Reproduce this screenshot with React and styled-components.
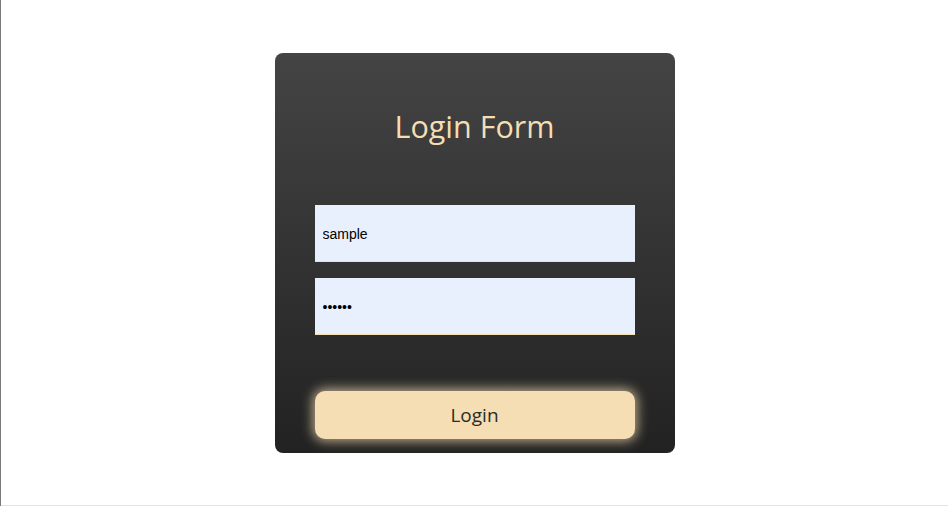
import React from "react";
import styled, { createGlobalStyle } from "styled-components";

const GlobalStyle = createGlobalStyle`
  html, body {
    margin: 0;
    padding: 0;
  }
  body {
    border-left: 1px solid #7a7a7a;
    font-family: "Open Sans", "Noto Sans", sans-serif;
  }
`;

const Page = styled.div`
  height: 505px;
  border-bottom: 1px solid #dde3ee;
  display: flex;
  align-items: center;
  justify-content: center;
  background: #ffffff;
`;

const Card = styled.form`
  width: 400px;
  height: 400px;
  box-sizing: border-box;
  padding: 54px 40px 14px;
  border-radius: 8px;
  background: linear-gradient(to bottom, #444444, #222222);
  display: flex;
  flex-direction: column;
`;

const Title = styled.h2`
  margin: 0 0 60px;
  text-align: center;
  font-size: 30.5px;
  line-height: 38px;
  font-weight: 400;
  color: #f5deb3;
`;

const Fields = styled.div`
  display: flex;
  flex-direction: column;
  gap: 16px;
`;

const Input = styled.input`
  width: 100%;
  height: 57px;
  box-sizing: border-box;
  padding: 3px 8px 0;
  border: none;
  border-bottom: 1px solid #f5deb3;
  background: #e8f0fe;
  font-family: "Liberation Sans", Arial, sans-serif;
  font-size: 14px;
  color: #000;
  outline: none;
`;

const Button = styled.button`
  margin-top: 56px;
  height: 48px;
  width: 100%;
  border: none;
  border-radius: 10px;
  background: #f5deb3;
  box-shadow: 0 0 12px 2px rgba(245, 222, 179, 0.75);
  font-family: "Open Sans", "Noto Sans", sans-serif;
  font-size: 19px;
  color: #2b2b2b;
  cursor: pointer;
`;

export default function App() {
  return (
    <>
      <GlobalStyle />
      <Page>
        <Card onSubmit={(e) => e.preventDefault()}>
          <Title>Login Form</Title>
          <Fields>
            <Input type="text" defaultValue="sample" />
            <Input type="password" defaultValue="123456" />
          </Fields>
          <Button type="submit">Login</Button>
        </Card>
      </Page>
    </>
  );
}
